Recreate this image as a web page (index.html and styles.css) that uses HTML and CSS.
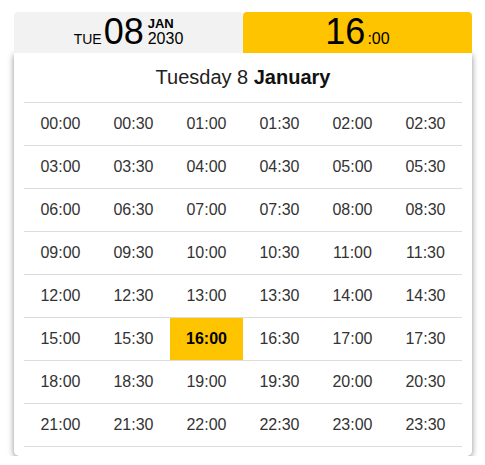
FILE: index.html
```html
<!DOCTYPE html>
<html>
<head>
<meta charset="utf-8">
<link rel="stylesheet" href="styles.css">
</head>
<body>
<div class="picker">
  <div class="tabs">
    <div class="tab tab-date"><span class="dow">TUE</span><span class="day">08</span><span class="my"><b class="mon">JAN</b><span class="yr">2030</span></span></div>
    <div class="tab tab-time"><span class="hh">16</span><span class="mm">:00</span></div>
  </div>
  <div class="panel">
    <div class="title">Tuesday 8 <b>January</b></div>
    <div class="grid">
      <div class="cell">00:00</div><div class="cell">00:30</div><div class="cell">01:00</div><div class="cell">01:30</div><div class="cell">02:00</div><div class="cell">02:30</div>
      <div class="cell">03:00</div><div class="cell">03:30</div><div class="cell">04:00</div><div class="cell">04:30</div><div class="cell">05:00</div><div class="cell">05:30</div>
      <div class="cell">06:00</div><div class="cell">06:30</div><div class="cell">07:00</div><div class="cell">07:30</div><div class="cell">08:00</div><div class="cell">08:30</div>
      <div class="cell">09:00</div><div class="cell">09:30</div><div class="cell">10:00</div><div class="cell">10:30</div><div class="cell">11:00</div><div class="cell">11:30</div>
      <div class="cell">12:00</div><div class="cell">12:30</div><div class="cell">13:00</div><div class="cell">13:30</div><div class="cell">14:00</div><div class="cell">14:30</div>
      <div class="cell">15:00</div><div class="cell">15:30</div><div class="cell selected">16:00</div><div class="cell">16:30</div><div class="cell">17:00</div><div class="cell">17:30</div>
      <div class="cell">18:00</div><div class="cell">18:30</div><div class="cell">19:00</div><div class="cell">19:30</div><div class="cell">20:00</div><div class="cell">20:30</div>
      <div class="cell">21:00</div><div class="cell">21:30</div><div class="cell">22:00</div><div class="cell">22:30</div><div class="cell">23:00</div><div class="cell">23:30</div>
    </div>
  </div>
</div>
</body>
</html>
```
FILE: styles.css
```css
html, body {
  margin: 0;
  padding: 0;
  background: #fff;
}

body {
  font-family: "Liberation Sans", Arial, sans-serif;
  color: #333;
}

.picker {
  width: 458px;
  padding: 12px 0 0 14px;
}

.tabs {
  display: flex;
}

.tab {
  flex: 1;
  height: 41px;
  box-sizing: border-box;
  padding-top: 2px;
  text-align: center;
  white-space: nowrap;
  border-radius: 4px 4px 0 0;
  line-height: 36px;
  color: #000;
}

.tab-date {
  background: #f2f2f2;
}

.tab-time {
  background: #ffc400;
}

.dow {
  font-size: 14px;
  margin-right: 2px;
}

.day,
.hh {
  font-size: 36px;
}

.my {
  display: inline-block;
  vertical-align: baseline;
  margin-left: 4px;
  text-align: left;
}

.mon {
  display: block;
  font-size: 13px;
  line-height: 14px;
  font-weight: bold;
}

.yr {
  display: block;
  font-size: 16px;
  line-height: 16px;
}

.mm {
  font-size: 16px;
  margin-left: 2px;
}

.panel {
  background: #fff;
  border-radius: 0 0 5px 5px;
  box-shadow: 0 2px 6px rgba(0, 0, 0, 0.45);
  padding: 0 10px 9px;
}

.title {
  height: 49px;
  line-height: 49px;
  text-align: center;
  font-size: 20px;
  color: #222;
}

.title b {
  color: #111;
}

.grid {
  display: grid;
  grid-template-columns: repeat(6, 73px);
  border-top: 1px solid #dcdcdc;
}

.cell {
  height: 42px;
  line-height: 42px;
  border-bottom: 1px solid #dcdcdc;
  text-align: center;
  font-size: 16px;
  color: #333;
}

.cell.selected {
  background: #ffc400;
  color: #000;
  font-weight: bold;
}
```
